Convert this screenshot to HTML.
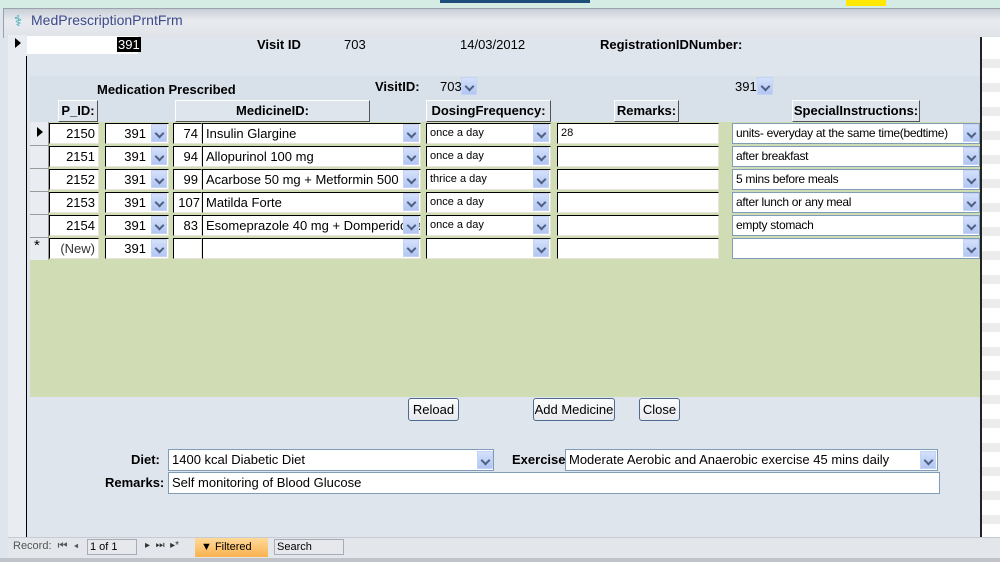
<!DOCTYPE html>
<html><head><style>
*{box-sizing:border-box;margin:0;padding:0}
body{width:1000px;height:562px;overflow:hidden;position:relative;background:#dfe5ed;font-family:"Liberation Sans",sans-serif;font-size:13px;color:#000}
.a{position:absolute}
.b{font-weight:bold}
.box{position:absolute;background:#fff;border:1px solid #000;border-right-color:#e8e4d8;border-bottom-color:#e8e4d8;height:21px;line-height:19px;padding:0 3px;white-space:nowrap;overflow:hidden}
.bb{position:absolute;background:#fff;border:1px solid #7f9db9;height:21px;line-height:19px;padding:0 3px;white-space:nowrap;overflow:hidden}
.r{text-align:right}
.dd{position:absolute;width:16px;height:18px;background:linear-gradient(#d4e0fb,#b2c6f2);border:1px solid #c4d3f3}
.dd:after{content:"";position:absolute;left:4px;top:5px;width:5px;height:5px;border-right:2px solid #4d6185;border-bottom:2px solid #4d6185;transform:rotate(45deg)}
.hd{position:absolute;height:22px;background:#dfe5ed;border:1px solid #fff;border-right-color:#555;border-bottom-color:#555;font-weight:bold;text-align:center;line-height:20px}
.btn{position:absolute;height:23px;border:1px solid #4e6b8f;border-radius:3px;background:linear-gradient(#fcfcfc,#e6e9ee);text-align:center;line-height:21px;font-size:13px}
.sm{font-size:11px}
.si{font-size:12px;letter-spacing:-0.3px}
.st{position:absolute;left:0;width:18px;height:9px;background:#ececec}
</style></head><body>
<div class="a" style="left:0;top:0;width:1000px;height:10px;background:#d4ece4"></div>
<div class="a" style="left:440px;top:0;width:150px;height:3px;background:#1e4f7a"></div>
<div class="a" style="left:846px;top:0;width:40px;height:6px;background:#ffe800"></div>
<div class="a" style="left:3px;top:8px;width:997px;height:30px;background:linear-gradient(#c9ced6,#e8ebef 40%,#dfe2e7);border-top:1px solid #9aa2ad;border-left:1px solid #9aa2ad"></div>
<div class="a" style="left:14px;top:12px;font-size:15px;color:#2aa0b0">⚕</div>
<div class="a" style="left:31px;top:12px;font-size:14px;color:#3c4a8a">MedPrescriptionPrntFrm</div>
<div class="a" style="left:8px;top:35px;width:19px;height:502px;background:#e9ecf0"></div>
<div class="a" style="left:26px;top:56px;width:1px;height:481px;background:#000"></div>
<div class="a" style="left:15px;top:38px;width:0;height:0;border-top:5px solid transparent;border-bottom:5px solid transparent;border-left:6px solid #000"></div>
<div class="a" style="left:27px;top:36px;width:111px;height:18px;background:#fff"></div>
<div class="a" style="left:117px;top:37px;background:#000;color:#fff;padding:0 1px;line-height:15px">391</div>
<div class="a b" style="left:257px;top:37px">Visit ID</div>
<div class="a" style="left:344px;top:37px">703</div>
<div class="a" style="left:460px;top:37px">14/03/2012</div>
<div class="a b" style="left:600px;top:37px">RegistrationIDNumber:</div>
<div class="a" style="left:980px;top:37px;width:20px;height:500px;background:#fff;border-left:2px solid #222">
<div class="st" style="top:22px"></div><div class="st" style="top:46px"></div><div class="st" style="top:70px"></div><div class="st" style="top:94px"></div><div class="st" style="top:118px"></div><div class="st" style="top:142px"></div><div class="st" style="top:166px"></div><div class="st" style="top:190px"></div><div class="st" style="top:214px"></div><div class="st" style="top:238px"></div><div class="st" style="top:262px"></div><div class="st" style="top:286px"></div><div class="st" style="top:310px"></div><div class="st" style="top:334px"></div><div class="st" style="top:358px"></div><div class="st" style="top:382px"></div><div class="st" style="top:406px"></div><div class="st" style="top:430px"></div><div class="st" style="top:454px"></div><div class="st" style="top:478px"></div>
</div>
<!-- subform -->
<div class="a" style="left:30px;top:76px;width:950px;height:46px;background:#d8e0ea"></div>
<div class="a" style="left:30px;top:122px;width:950px;height:275px;background:#cfdcb4"></div>
<div class="a b" style="left:97px;top:82px">Medication Prescribed</div>
<div class="a b" style="left:375px;top:79px">VisitID:</div>
<div class="a" style="left:440px;top:79px">703</div><div class="dd" style="left:461px;top:77px"></div>
<div class="a" style="left:735px;top:79px">391</div><div class="dd" style="left:757px;top:77px"></div>
<div class="hd" style="left:58px;top:100px;width:40px">P_ID:</div>
<div class="hd" style="left:175px;top:100px;width:195px">MedicineID:</div>
<div class="hd" style="left:426px;top:100px;width:125px">DosingFrequency:</div>
<div class="hd" style="left:614px;top:100px;width:65px">Remarks:</div>
<div class="hd" style="left:792px;top:100px;width:128px">SpecialInstructions:</div>
<!-- selector column -->
<div class="a" style="left:30px;top:122px;width:19px;height:138px;background:#e9ecf0;border-right:1px solid #999"></div>
<div class="a" style="left:30px;top:145px;width:19px;height:1px;background:#999"></div>
<div class="a" style="left:30px;top:168px;width:19px;height:1px;background:#999"></div>
<div class="a" style="left:30px;top:191px;width:19px;height:1px;background:#999"></div>
<div class="a" style="left:30px;top:214px;width:19px;height:1px;background:#999"></div>
<div class="a" style="left:30px;top:237px;width:19px;height:1px;background:#999"></div>
<div class="a" style="left:37px;top:127px;border-top:5px solid transparent;border-bottom:5px solid transparent;border-left:6px solid #000"></div>
<div class="a" style="left:34px;top:237px;font-size:15px">*</div>
<!-- rows -->
<div class="box r" style="left:49px;top:123px;width:50px">2150</div><div class="box r" style="left:105px;top:123px;width:64px;padding-right:22px">391</div><div class="dd" style="left:151px;top:124px"></div><div class="box r" style="left:173px;top:123px;width:29px">74</div><div class="bb" style="left:202px;top:123px;width:219px;border-color:#000 #e8e4d8 #e8e4d8 #000">Insulin Glargine</div><div class="dd" style="left:403px;top:124px"></div><div class="box sm" style="left:426px;top:123px;width:125px">once a day</div><div class="dd" style="left:533px;top:124px"></div><div class="box sm" style="left:557px;top:123px;width:162px">28</div><div class="bb si" style="left:732px;top:123px;width:248px">units- everyday at the same time(bedtime)</div><div class="dd" style="left:963px;top:124px"></div>
<div class="box r" style="left:49px;top:146px;width:50px">2151</div><div class="box r" style="left:105px;top:146px;width:64px;padding-right:22px">391</div><div class="dd" style="left:151px;top:147px"></div><div class="box r" style="left:173px;top:146px;width:29px">94</div><div class="bb" style="left:202px;top:146px;width:219px;border-color:#000 #e8e4d8 #e8e4d8 #000">Allopurinol 100 mg</div><div class="dd" style="left:403px;top:147px"></div><div class="box sm" style="left:426px;top:146px;width:125px">once a day</div><div class="dd" style="left:533px;top:147px"></div><div class="box" style="left:557px;top:146px;width:162px"></div><div class="bb si" style="left:732px;top:146px;width:248px">after breakfast</div><div class="dd" style="left:963px;top:147px"></div>
<div class="box r" style="left:49px;top:169px;width:50px">2152</div><div class="box r" style="left:105px;top:169px;width:64px;padding-right:22px">391</div><div class="dd" style="left:151px;top:170px"></div><div class="box r" style="left:173px;top:169px;width:29px">99</div><div class="bb" style="left:202px;top:169px;width:219px;border-color:#000 #e8e4d8 #e8e4d8 #000">Acarbose 50 mg + Metformin 500</div><div class="dd" style="left:403px;top:170px"></div><div class="box sm" style="left:426px;top:169px;width:125px">thrice a day</div><div class="dd" style="left:533px;top:170px"></div><div class="box" style="left:557px;top:169px;width:162px"></div><div class="bb si" style="left:732px;top:169px;width:248px">5 mins before meals</div><div class="dd" style="left:963px;top:170px"></div>
<div class="box r" style="left:49px;top:192px;width:50px">2153</div><div class="box r" style="left:105px;top:192px;width:64px;padding-right:22px">391</div><div class="dd" style="left:151px;top:193px"></div><div class="box r" style="left:173px;top:192px;width:29px;padding:0 1px">107</div><div class="bb" style="left:202px;top:192px;width:219px;border-color:#000 #e8e4d8 #e8e4d8 #000">Matilda Forte</div><div class="dd" style="left:403px;top:193px"></div><div class="box sm" style="left:426px;top:192px;width:125px">once a day</div><div class="dd" style="left:533px;top:193px"></div><div class="box" style="left:557px;top:192px;width:162px"></div><div class="bb si" style="left:732px;top:192px;width:248px">after lunch or any meal</div><div class="dd" style="left:963px;top:193px"></div>
<div class="box r" style="left:49px;top:215px;width:50px">2154</div><div class="box r" style="left:105px;top:215px;width:64px;padding-right:22px">391</div><div class="dd" style="left:151px;top:216px"></div><div class="box r" style="left:173px;top:215px;width:29px">83</div><div class="bb" style="left:202px;top:215px;width:219px;border-color:#000 #e8e4d8 #e8e4d8 #000">Esomeprazole 40 mg + Domperidone</div><div class="dd" style="left:403px;top:216px"></div><div class="box sm" style="left:426px;top:215px;width:125px">once a day</div><div class="dd" style="left:533px;top:216px"></div><div class="box" style="left:557px;top:215px;width:162px"></div><div class="bb si" style="left:732px;top:215px;width:248px">empty stomach</div><div class="dd" style="left:963px;top:216px"></div>
<div class="box r" style="left:49px;top:238px;width:50px;color:#333">(New)</div><div class="box r" style="left:105px;top:238px;width:64px;padding-right:22px">391</div><div class="dd" style="left:151px;top:239px"></div><div class="box r" style="left:173px;top:238px;width:29px"></div><div class="bb" style="left:202px;top:238px;width:219px;border-color:#000 #e8e4d8 #e8e4d8 #000"></div><div class="dd" style="left:403px;top:239px"></div><div class="box sm" style="left:426px;top:238px;width:125px"></div><div class="dd" style="left:533px;top:239px"></div><div class="box" style="left:557px;top:238px;width:162px"></div><div class="bb sm" style="left:732px;top:238px;width:248px"></div><div class="dd" style="left:963px;top:239px"></div>
<!-- buttons -->
<div class="btn" style="left:408px;top:398px;width:51px">Reload</div>
<div class="btn" style="left:533px;top:398px;width:82px">Add Medicine</div>
<div class="btn" style="left:639px;top:398px;width:41px">Close</div>
<div class="a b" style="left:131px;top:452px">Diet:</div>
<div class="bb" style="left:168px;top:449px;width:326px;height:22px;line-height:20px">1400 kcal Diabetic Diet</div><div class="dd" style="left:477px;top:451px"></div>
<div class="a b" style="left:512px;top:452px">Exercise:</div>
<div class="bb" style="left:565px;top:449px;width:373px;height:22px;line-height:20px">Moderate Aerobic and Anaerobic exercise 45 mins daily</div><div class="dd" style="left:920px;top:451px"></div>
<div class="a b" style="left:105px;top:475px">Remarks:</div>
<div class="bb" style="left:168px;top:472px;width:772px;height:22px;line-height:20px">Self monitoring of Blood Glucose</div>
<!-- status bar -->
<div class="a" style="left:8px;top:537px;width:992px;height:21px;background:#e3e6ea;border-top:1px solid #c8ccd2"></div>
<div class="a" style="left:0;top:558px;width:1000px;height:4px;background:#c0c4ca"></div>
<div class="a" style="left:13px;top:540px;font-size:11px;color:#555">Record: &nbsp;⏮ &nbsp;◂</div>
<div class="a" style="left:87px;top:539px;width:50px;height:16px;border:1px solid #aab;background:#e6e8ec;font-size:11px;padding-left:2px;line-height:14px">1 of 1</div>
<div class="a" style="left:145px;top:540px;font-size:10px;color:#333">▸ &nbsp;⏭ &nbsp;▸*</div>
<div class="a" style="left:195px;top:538px;width:73px;height:19px;background:linear-gradient(#ffd99a,#f9b24e);font-size:11px;line-height:18px;padding-left:6px">▼ Filtered</div>
<div class="a" style="left:274px;top:539px;width:70px;height:16px;border:1px solid #aab;background:#e6e8ec;font-size:11px;padding-left:2px;line-height:14px">Search</div>
</body></html>
